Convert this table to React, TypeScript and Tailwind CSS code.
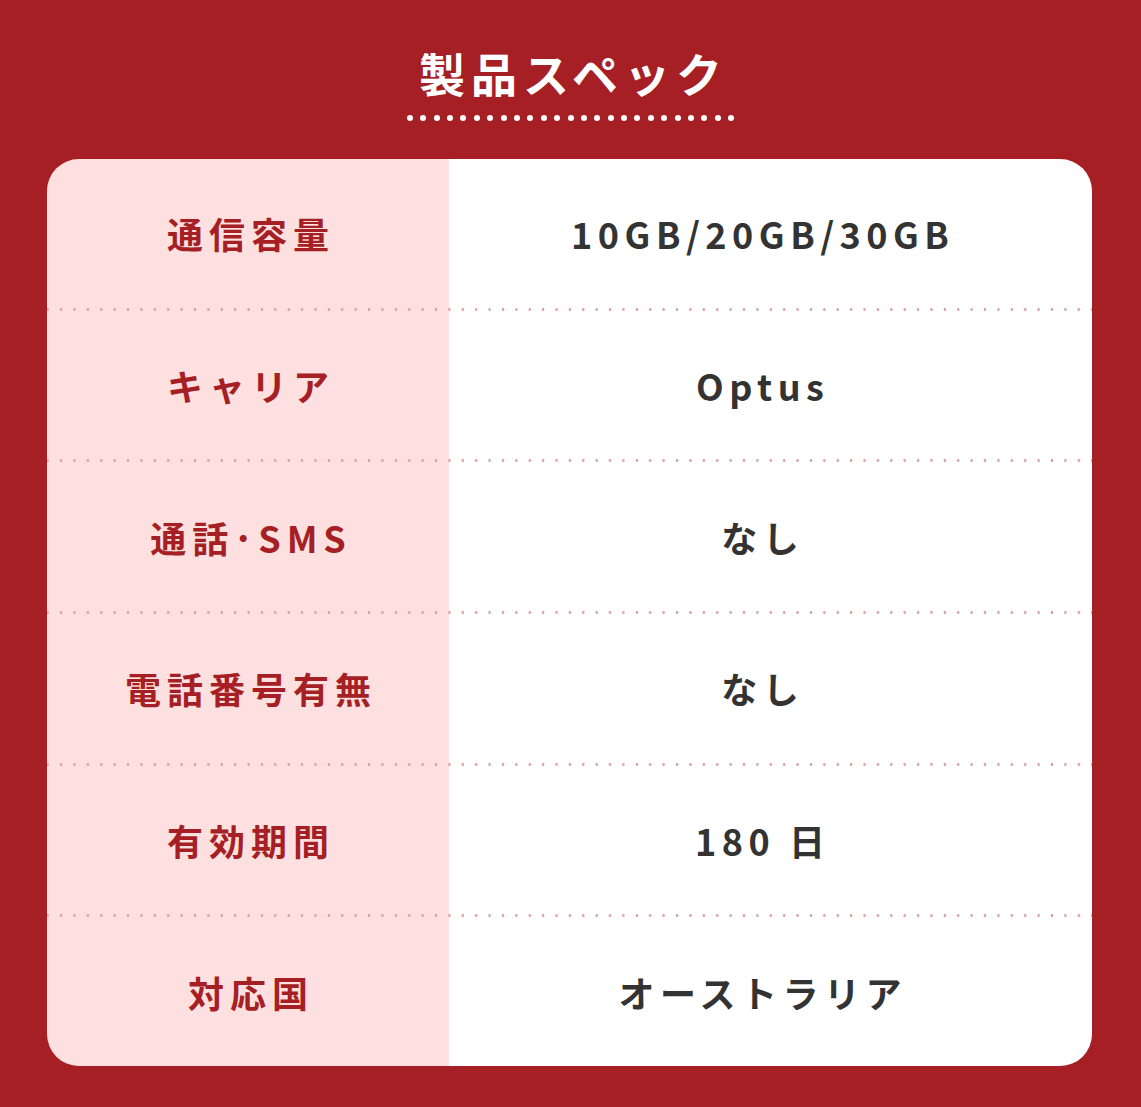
import React from "react";

const rows: { label: string; value: string }[] = [
  { label: "通信容量", value: "10GB/20GB/30GB" },
  { label: "キャリア", value: "Optus" },
  { label: "通話･SMS", value: "なし" },
  { label: "電話番号有無", value: "なし" },
  { label: "有効期間", value: "180 日" },
  { label: "対応国", value: "オーストラリア" },
];

const font = { fontFamily: '"Noto Sans CJK JP", "Noto Sans", sans-serif' };

export default function App() {
  return (
    <div
      className="w-[1141px] h-[1107px] bg-[#a61f24] flex flex-col items-center pt-[49px]"
      style={font}
    >
      <h1 className="text-white text-[46px] font-bold leading-[46px] tracking-[6px] pl-[6px]">
        製品スペック
      </h1>
      <div className="flex gap-[7.4px] mt-[20px]">
        {Array.from({ length: 25 }).map((_, i) => (
          <span key={i} className="block w-[6px] h-[6px] rounded-full bg-white" />
        ))}
      </div>
      <div className="mt-[38px] ml-[-2px] w-[1045px] h-[907px] rounded-[32px] overflow-hidden bg-[linear-gradient(90deg,#fde0df_402px,#ffffff_402px)] flex flex-col">
        {rows.map((r, i) => (
          <React.Fragment key={r.label}>
            {i > 0 && (
              <div className="h-[3px] shrink-0 bg-[radial-gradient(circle,#d9a3a7_1.1px,transparent_1.6px)] bg-[length:13.4px_3px] bg-[position:-6px_0]" />
            )}
            <div className="flex flex-1 items-center">
              <div className="w-[402px] text-center text-[#a61f24] text-[36px] font-bold tracking-[6px] pl-[6px]">
                {r.label}
              </div>
              <div className="flex-1 pr-[21px] text-center text-[#333333] text-[36px] font-bold tracking-[5.5px] pl-[5.5px]">
                {r.value}
              </div>
            </div>
          </React.Fragment>
        ))}
      </div>
    </div>
  );
}
